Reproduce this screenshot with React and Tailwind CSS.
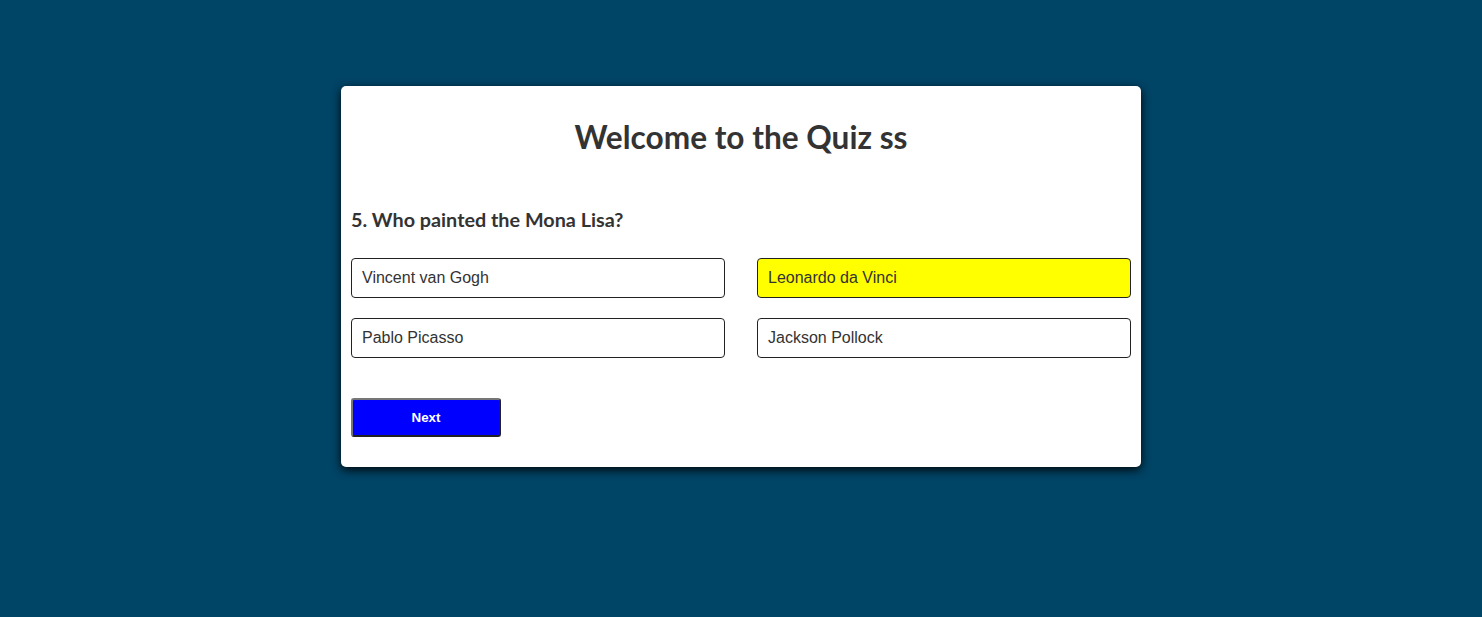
import React, { useState } from "react";

const options = [
  "Vincent van Gogh",
  "Leonardo da Vinci",
  "Pablo Picasso",
  "Jackson Pollock",
];

const App = () => {
  const [selected, setSelected] = useState("Leonardo da Vinci");

  return (
    <div className="min-h-screen bg-[#004466] pt-[86px]">
      <div className="mx-auto w-[800px] rounded-[5px] bg-white px-[10px] pb-[30px] pt-[32px] shadow-[0_3px_10px_rgba(0,0,0,0.9)]">
        {/* Title */}
        <h1 className="text-center font-['Lato',sans-serif] text-[31.6px] font-bold leading-[38px] text-[#333]">
          Welcome to the Quiz ss
        </h1>

        {/* Question */}
        <h2 className="mt-[51px] font-['Lato',sans-serif] text-[19.8px] font-bold leading-[24px] text-[#333]">
          5. Who painted the Mona Lisa?
        </h2>

        {/* Answers */}
        <div className="mt-[27px] grid grid-cols-2 gap-x-[32px] gap-y-[20px]">
          {options.map((opt) => (
            <button
              key={opt}
              onClick={() => setSelected(opt)}
              className={`h-[40px] rounded-[4px] border border-[#222] px-[10px] text-left font-['Liberation_Sans',Arial,sans-serif] text-[16px] text-[#333] ${
                selected === opt ? "bg-[#ffff00]" : "bg-white"
              }`}
            >
              {opt}
            </button>
          ))}
        </div>

        {/* Next */}
        <button className="mt-[40px] h-[39px] w-[150px] rounded-[3px] border-2 border-t-[#767676] border-l-[#767676] border-b-[#222] border-r-[#222] bg-[#0000ff] font-['Liberation_Sans',Arial,sans-serif] text-[13.333px] font-bold text-white">
          Next
        </button>
      </div>
    </div>
  );
};

export default App;
